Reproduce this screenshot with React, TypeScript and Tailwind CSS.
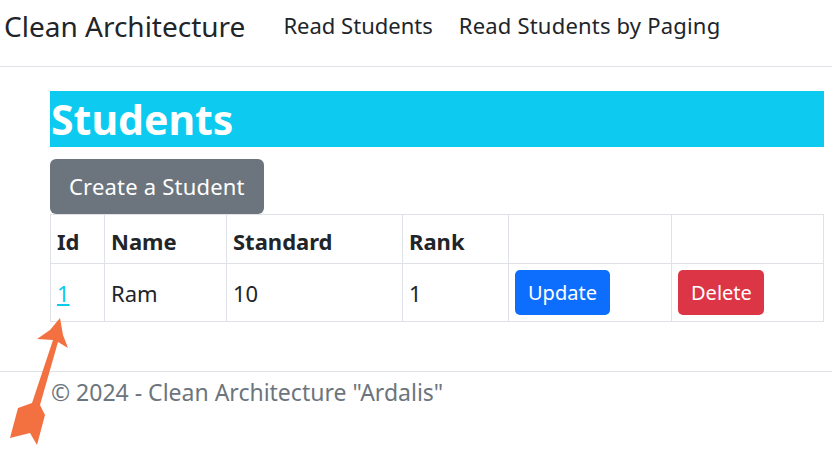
import React from "react";

export default function App() {
  return (
    <div className="relative w-[832px] h-[455px] bg-white overflow-hidden text-[#212529]" style={{ fontFamily: '"Noto Sans", "Open Sans", sans-serif' }}>
      <nav className="h-[67px] border-b border-[#dee2e6] flex items-center pl-[4px]">
        <span className="text-[28px] leading-[30px] text-[#212529] mr-[38px] -mt-[14px]">Clean Architecture</span>
        <span className="text-[22px] leading-[30px] mr-[26px] -mt-[16px]">Read Students</span>
        <span className="text-[22px] leading-[30px] tracking-[0.2px] -mt-[16px]">Read Students by Paging</span>
      </nav>
      <main className="pl-[50px] pr-[8px] pt-[24px] h-[304px]">
        <h1 className="bg-[#0dcaf0] text-white font-bold text-[41px] leading-[56px] pl-[1px]">Students</h1>
        <button className="mt-[12px] h-[55px] px-[19px] bg-[#6c757d] text-white text-[22px] tracking-[0.2px] rounded-[6px]">Create a Student</button>
        <table className="w-full border-collapse text-[22px] leading-[30px]">
          <thead>
            <tr className="h-[49px]">
              <th className="border border-[#dee2e6] text-left font-bold px-[6px] pt-[3px] w-[54px]">Id</th>
              <th className="border border-[#dee2e6] text-left font-bold px-[6px] pt-[3px] w-[122px]">Name</th>
              <th className="border border-[#dee2e6] text-left font-bold px-[6px] pt-[3px] w-[176px]">Standard</th>
              <th className="border border-[#dee2e6] text-left font-bold px-[6px] pt-[3px] w-[106px]">Rank</th>
              <th className="border border-[#dee2e6] w-[163px]"></th>
              <th className="border border-[#dee2e6]"></th>
            </tr>
          </thead>
          <tbody>
            <tr className="h-[58px]">
              <td className="border border-[#dee2e6] px-[6px]"><a className="text-[#0dcaf0] underline">1</a></td>
              <td className="border border-[#dee2e6] px-[6px]">Ram</td>
              <td className="border border-[#dee2e6] px-[6px]">10</td>
              <td className="border border-[#dee2e6] px-[6px]">1</td>
              <td className="border border-[#dee2e6] px-[6px]">
                <button className="h-[45px] px-[13px] bg-[#0d6efd] text-white text-[20px] rounded-[5px]">Update</button>
              </td>
              <td className="border border-[#dee2e6] px-[6px]">
                <button className="h-[45px] px-[13px] w-[86px] bg-[#dc3545] text-white text-[20px] rounded-[5px]">Delete</button>
              </td>
            </tr>
          </tbody>
        </table>
      </main>
      <footer className="border-t border-[#dee2e6] pl-[51px] pt-[5px] text-[23px] leading-[30px] text-[#6c757d]">
        © 2024 - Clean Architecture "Ardalis"
      </footer>
      <svg className="absolute left-0 top-0" width="832" height="455" viewBox="0 0 832 455">
        <polygon fill="#f37140" points="60,318 63,335 68,348 58,342 40,405 45,415 37,445 30,433 10,438 18,408 32,403 53,340 37,339 50,330" />
      </svg>
    </div>
  );
}
